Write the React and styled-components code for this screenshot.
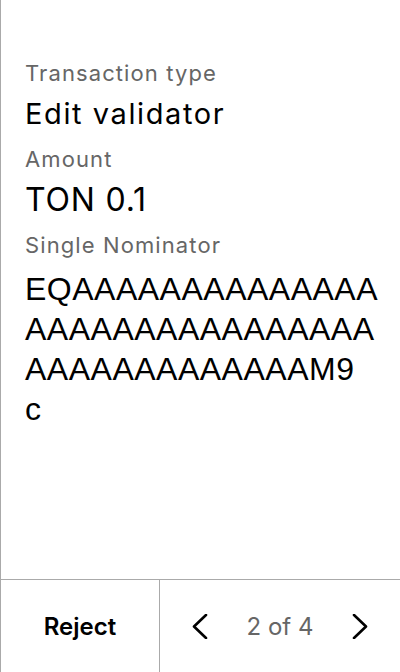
import styled, { createGlobalStyle } from "styled-components";

const GlobalStyle = createGlobalStyle`
  html, body {
    margin: 0;
    padding: 0;
    background: #fff;
  }
  body {
    font-family: Inter, "Noto Sans", sans-serif;
  }
`;

const Screen = styled.div`
  width: 400px;
  height: 672px;
  box-sizing: border-box;
  display: flex;
  flex-direction: column;
  border-left: 1px solid #aaa;
  background: #fff;
`;

const Content = styled.div`
  flex: 1;
  display: flex;
  flex-direction: column;
  padding: 60px 20px 0 24px;
`;

const Label = styled.div`
  font-size: 22px;
  line-height: 26px;
  letter-spacing: 1.1px;
  color: #666;
  margin-bottom: ${(p) => p.gap ?? 8}px;
`;

const Value = styled.div`
  font-size: ${(p) => p.size || 28}px;
  line-height: 40px;
  letter-spacing: ${(p) => p.spacing ?? 0}px;
  color: #000;
  margin-bottom: 12px;
`;

const Address = styled.div`
  font-family: "Liberation Sans", Arial, sans-serif;
  font-size: 32px;
  line-height: 40px;
  letter-spacing: 0.5px;
  color: #000;
`;

const AddressLine = styled.span`
  display: block;
  white-space: nowrap;
`;

const Footer = styled.div`
  height: 92px;
  flex-shrink: 0;
  display: grid;
  grid-template-columns: 159px 1fr;
  border-top: 1px solid #aaa;
`;

const RejectButton = styled.button`
  border: none;
  border-right: 1px solid #aaa;
  background: none;
  font-family: Inter, sans-serif;
  font-size: 24px;
  font-weight: 600;
  color: #000;
  padding: 0;
`;

const Pager = styled.div`
  display: flex;
  align-items: center;
  justify-content: space-between;
  padding: 0 32px 0 32px;
`;

const Arrow = styled.button`
  border: none;
  background: none;
  padding: 0;
  display: flex;
  align-items: center;
`;

const PageText = styled.span`
  font-size: 24px;
  color: #666;
`;

function Chevron({ dir }) {
  const pts = dir === "left" ? "14,1 2,12.5 14,24" : "2,1 14,12.5 2,24";
  return (
    <svg width="16" height="25" viewBox="0 0 16 25">
      <polyline
        points={pts}
        fill="none"
        stroke="#000"
        strokeWidth="2.6"
        strokeLinecap="round"
        strokeLinejoin="round"
      />
    </svg>
  );
}

const addressLines = [
  "EQ" + "A".repeat(14),
  "A".repeat(16),
  "A".repeat(13) + "M9",
  "c",
];

export default function App() {
  return (
    <>
      <GlobalStyle />
      <Screen>
        <Content>
          <Label>Transaction type</Label>
          <Value size={29} spacing={1.6}>Edit validator</Value>
          <Label>Amount</Label>
          <Value size={32} spacing={0.8}>TON 0.1</Value>
          <Label gap={11}>Single Nominator</Label>
          <Address>
            {addressLines.map((line, i) => (
              <AddressLine key={i}>{line}</AddressLine>
            ))}
          </Address>
        </Content>
        <Footer>
          <RejectButton>Reject</RejectButton>
          <Pager>
            <Arrow aria-label="Previous">
              <Chevron dir="left" />
            </Arrow>
            <PageText>2 of 4</PageText>
            <Arrow aria-label="Next">
              <Chevron dir="right" />
            </Arrow>
          </Pager>
        </Footer>
      </Screen>
    </>
  );
}
